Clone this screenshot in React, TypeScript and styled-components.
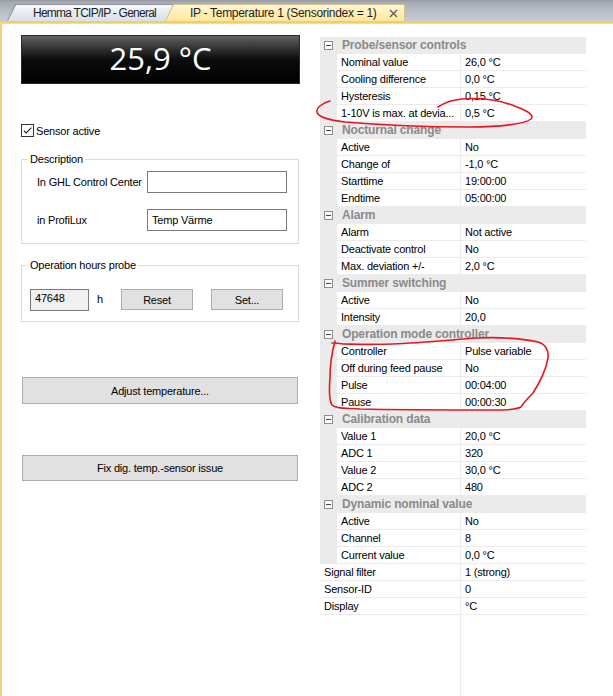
import React from 'react';
import styled, { createGlobalStyle } from 'styled-components';

const GlobalStyle = createGlobalStyle`
  html, body { margin: 0; padding: 0; background: #fff; }
  body {
    font-family: "Liberation Sans", Arial, sans-serif;
    font-size: 11px;
    letter-spacing: -0.2px;
    color: #000;
  }
  * { box-sizing: border-box; }
`;

const Window = styled.div`
  position: relative;
  width: 613px;
  height: 696px;
  display: flex;
  flex-direction: column;
  overflow: hidden;
  background: #fff;
`;

/* ---------- document tabs ---------- */

const TabStrip = styled.div`
  height: 21px;
  flex: none;
  display: flex;
  align-items: flex-end;
  padding-left: 7px;
  background: linear-gradient(#92979f 0, #a6abb3 2px, #b9bec6 55%, #c7ccd4 100%);
`;

const TabEdge = styled.div<{ $active?: boolean; $width: number }>`
  width: ${p => p.$width}px;
  height: 17px;
  padding: 1px 1px 0 1px;
  margin-left: ${p => (p.$active ? -8 : 0)}px;
  background: ${p => (p.$active ? '#d8c48a' : '#8e959f')};
  clip-path: polygon(0 100%, 8px 0, 100% 0, 100% 100%);
  z-index: ${p => (p.$active ? 1 : 0)};
`;

const TabFace = styled.div<{ $active?: boolean; $pad: number; $spacing: number }>`
  height: 100%;
  display: flex;
  align-items: center;
  padding-left: ${p => p.$pad}px;
  padding-right: 6px;
  clip-path: polygon(0 100%, 8px 0, 100% 0, 100% 100%);
  background: ${p =>
    p.$active
      ? 'linear-gradient(#fff6d6, #ffeeb6 50%, #ffe79c)'
      : 'linear-gradient(#f6f8fb, #e6ebf1 50%, #d9e0e8)'};
  font-size: 12px;
  letter-spacing: ${p => p.$spacing}px;
  color: #1e1e1e;
  white-space: nowrap;
`;

const CloseMark = styled.svg`
  margin-left: auto;
  flex: none;
`;

const TabRule = styled.div`
  height: 3px;
  flex: none;
  border-top: 2px solid #f1d063;
  background: #d7dbe2;
`;

/* ---------- page body ---------- */

const Content = styled.div`
  flex: 1;
  display: flex;
  border-left: 2px solid #f2d572;
  min-height: 0;
`;

const LeftPane = styled.div`
  width: 318px;
  flex: none;
  display: flex;
  flex-direction: column;
  align-items: flex-start;
  padding: 11px 0 0 19px;
`;

const TempDisplay = styled.div`
  width: 279px;
  height: 49px;
  display: flex;
  align-items: center;
  justify-content: center;
  background: linear-gradient(#626262 0%, #3a3a3a 22%, #0c0c0c 50%, #000 100%);
  border: 1px solid #2a2a2a;
  color: #fff;
  font-family: "Open Sans", "Noto Sans", sans-serif;
  font-size: 31px;
  letter-spacing: 0;
  line-height: 1;
  padding-bottom: 2px;
`;

const CheckRow = styled.label`
  margin-top: 40px;
  display: flex;
  align-items: center;
  gap: 2px;
  height: 13px;
`;

const CheckBox = styled.span`
  width: 13px;
  height: 13px;
  border: 1px solid #333;
  background: #fff;
  display: flex;
`;

const Group = styled.fieldset<{ $top: number }>`
  margin: ${p => p.$top}px 0 0 0;
  width: 278px;
  padding: 0;
  border: 1px solid #dcdcdc;
  min-width: 0;
`;

const Legend = styled.legend`
  margin-left: 6px;
  padding: 0 2px;
  line-height: 14px;
  font-size: 11px;
`;

const GroupBody = styled.div<{ $pad: string; $gap?: number }>`
  padding: ${p => p.$pad};
  display: flex;
  flex-direction: column;
  gap: ${p => p.$gap ?? 0}px;
`;

const FieldRow = styled.div`
  display: flex;
  align-items: center;
  height: 22px;
`;

const FieldLabel = styled.span<{ $width: number }>`
  width: ${p => p.$width}px;
  flex: none;
  white-space: nowrap;
`;

const TextBox = styled.div<{ $width: number; $readonly?: boolean }>`
  width: ${p => p.$width}px;
  height: 22px;
  flex: none;
  border: 1px solid #7a7a7a;
  background: ${p => (p.$readonly ? '#f0f0f0' : '#fff')};
  padding: ${p => (p.$readonly ? '0 0 4px 4px' : '0 0 0 4px')};
  display: flex;
  align-items: center;
`;

const HoursRow = styled.div`
  display: flex;
  align-items: flex-start;
`;

const Unit = styled.span`
  width: 24px;
  margin-left: 8px;
  line-height: 20px;
`;

const Button = styled.div<{ $width: number; $height: number; $top?: number; $left?: number }>`
  width: ${p => p.$width}px;
  height: ${p => p.$height}px;
  margin-top: ${p => p.$top ?? 0}px;
  margin-left: ${p => p.$left ?? 0}px;
  flex: none;
  display: flex;
  align-items: center;
  justify-content: center;
  background: #e1e1e1;
  border: 1px solid #adadad;
  white-space: nowrap;
`;

/* ---------- property grid ---------- */

const RightPane = styled.div`
  width: 266px;
  flex: none;
  margin-top: 13px;
  display: flex;
  flex-direction: column;
`;

const Row = styled.div`
  display: flex;
  height: 17px;
  flex: none;
`;

const Gutter = styled.div`
  width: 17px;
  flex: none;
  background: #ebebeb;
  display: flex;
  align-items: center;
  justify-content: center;
`;

const Minus = styled.span`
  position: relative;
  width: 9px;
  height: 9px;
  border: 1px solid #8e8e8e;
  background: #fff;
  &::after {
    content: '';
    position: absolute;
    left: 1px;
    top: 3px;
    width: 5px;
    height: 1px;
    background: #444;
  }
`;

const CategoryTitle = styled.div`
  flex: 1;
  background: #ebebeb;
  padding-left: 5px;
  font-weight: bold;
  font-size: 12px;
  letter-spacing: -0.15px;
  color: #8a8a8a;
  line-height: 17px;
  white-space: nowrap;
`;

const NameCell = styled.div<{ $indent?: boolean }>`
  width: ${p => (p.$indent ? 123 : 140)}px;
  flex: none;
  padding-left: 4px;
  border-bottom: 1px solid #ececec;
  line-height: 16px;
  white-space: nowrap;
  overflow: hidden;
`;

const ValueCell = styled.div`
  flex: 1;
  padding-left: 4px;
  border-left: 1px solid #ececec;
  border-bottom: 1px solid #ececec;
  line-height: 16px;
  white-space: nowrap;
`;

const GridFiller = styled.div`
  flex: 1;
  display: flex;
`;

const FillerName = styled.div`
  width: 140px;
  flex: none;
`;

const FillerValue = styled.div`
  flex: 1;
  border-left: 1px solid #ececec;
`;

const Marks = styled.svg`
  position: absolute;
  left: 0;
  top: 0;
  pointer-events: none;
`;

type Prop = [string, string];
type Section = { title: string; rows: Prop[] };

const sections: Section[] = [
  {
    title: 'Probe/sensor controls',
    rows: [
      ['Nominal value', '26,0 °C'],
      ['Cooling difference', '0,0 °C'],
      ['Hysteresis', '0,15 °C'],
      ['1-10V is max. at devia...', '0,5 °C'],
    ],
  },
  {
    title: 'Nocturnal change',
    rows: [
      ['Active', 'No'],
      ['Change of', '-1,0 °C'],
      ['Starttime', '19:00:00'],
      ['Endtime', '05:00:00'],
    ],
  },
  {
    title: 'Alarm',
    rows: [
      ['Alarm', 'Not active'],
      ['Deactivate control', 'No'],
      ['Max. deviation +/-', '2,0 °C'],
    ],
  },
  {
    title: 'Summer switching',
    rows: [
      ['Active', 'No'],
      ['Intensity', '20,0'],
    ],
  },
  {
    title: 'Operation mode controller',
    rows: [
      ['Controller', 'Pulse variable'],
      ['Off during feed pause', 'No'],
      ['Pulse', '00:04:00'],
      ['Pause', '00:00:30'],
    ],
  },
  {
    title: 'Calibration data',
    rows: [
      ['Value 1', '20,0 °C'],
      ['ADC 1', '320'],
      ['Value 2', '30,0 °C'],
      ['ADC 2', '480'],
    ],
  },
  {
    title: 'Dynamic nominal value',
    rows: [
      ['Active', 'No'],
      ['Channel', '8'],
      ['Current value', '0,0 °C'],
    ],
  },
];

const looseRows: Prop[] = [
  ['Signal filter', '1 (strong)'],
  ['Sensor-ID', '0'],
  ['Display', '°C'],
];

function PropertyGrid() {
  return (
    <RightPane>
      {sections.map(sec => (
        <React.Fragment key={sec.title}>
          <Row>
            <Gutter>
              <Minus />
            </Gutter>
            <CategoryTitle>{sec.title}</CategoryTitle>
          </Row>
          {sec.rows.map(([name, value], i) => (
            <Row key={sec.title + i}>
              <Gutter />
              <NameCell $indent>{name}</NameCell>
              <ValueCell>{value}</ValueCell>
            </Row>
          ))}
        </React.Fragment>
      ))}
      {looseRows.map(([name, value]) => (
        <Row key={name}>
          <NameCell>{name}</NameCell>
          <ValueCell>{value}</ValueCell>
        </Row>
      ))}
      <GridFiller>
        <FillerName />
        <FillerValue />
      </GridFiller>
    </RightPane>
  );
}

export default function App() {
  return (
    <Window>
      <GlobalStyle />
      <TabStrip>
        <TabEdge $width={166}>
          <TabFace $pad={25} $spacing={-0.75}>Hemma TCIP/IP - General</TabFace>
        </TabEdge>
        <TabEdge $active $width={240}>
          <TabFace $active $pad={24} $spacing={-0.3}>
            IP - Temperature 1 (Sensorindex = 1)
            <CloseMark width="9" height="9" viewBox="0 0 9 9">
              <path d="M1 1 L8 8 M8 1 L1 8" stroke="#5a5a5a" strokeWidth="1.3" fill="none" />
            </CloseMark>
          </TabFace>
        </TabEdge>
      </TabStrip>
      <TabRule />
      <Content>
        <LeftPane>
          <TempDisplay>25,9 °C</TempDisplay>
          <CheckRow>
            <CheckBox>
              <svg width="11" height="11" viewBox="0 0 11 11">
                <path d="M1.8 5.6 L4.2 8 L9.4 2.6" stroke="#222" strokeWidth="1.1" fill="none" />
              </svg>
            </CheckBox>
            Sensor active
          </CheckRow>
          <Group $top={15}>
            <Legend>Description</Legend>
            <GroupBody $pad="5px 0 12px 15px" $gap={16}>
              <FieldRow>
                <FieldLabel $width={110}>In GHL Control Center</FieldLabel>
                <TextBox $width={140} />
              </FieldRow>
              <FieldRow>
                <FieldLabel $width={110}>in ProfiLux</FieldLabel>
                <TextBox $width={140}>Temp Värme</TextBox>
              </FieldRow>
            </GroupBody>
          </Group>
          <Group $top={14}>
            <Legend>Operation hours probe</Legend>
            <GroupBody $pad="17px 0 10px 8px">
              <HoursRow>
                <TextBox $width={59} $readonly>
                  47648
                </TextBox>
                <Unit>h</Unit>
                <Button $width={72} $height={21}>
                  Reset
                </Button>
                <Button $width={72} $height={21} $left={18}>
                  Set...
                </Button>
              </HoursRow>
            </GroupBody>
          </Group>
          <Button $width={276} $height={27} $top={55} $left={1}>
            Adjust temperature...
          </Button>
          <Button $width={276} $height={26} $top={51} $left={1}>
            Fix dig. temp.-sensor issue
          </Button>
        </LeftPane>
        <PropertyGrid />
      </Content>
      <Marks width="613" height="696" viewBox="0 0 613 696">
        <path
          d="M330 101 C322 103 316 108 317 112 C318 117 328 120 345 122 C380 125 430 127 470 127 C500 127 525 124 531 119 C535 114 525 110 512 105 C495 99 475 98 462 99 C450 100 444 103 438 107"
          stroke="#e8161f"
          strokeWidth="1.6"
          fill="none"
          strokeLinecap="round"
        />
        <path
          d="M335 341 C332 352 330 365 330 378 C329 390 329 400 332 405 C336 409 345 408 360 409 C400 410 450 410 497 410 C510 410 517 409 521 407 C524 402 528 398 533 393 C540 382 546 370 548 358 C549 350 545 344 538 342 C520 338 500 337 477 338 C450 340 420 343 393 344 C370 345 350 344 343 344 C338 343 334 343 332 343"
          stroke="#e8161f"
          strokeWidth="1.6"
          fill="none"
          strokeLinecap="round"
        />
      </Marks>
    </Window>
  );
}
